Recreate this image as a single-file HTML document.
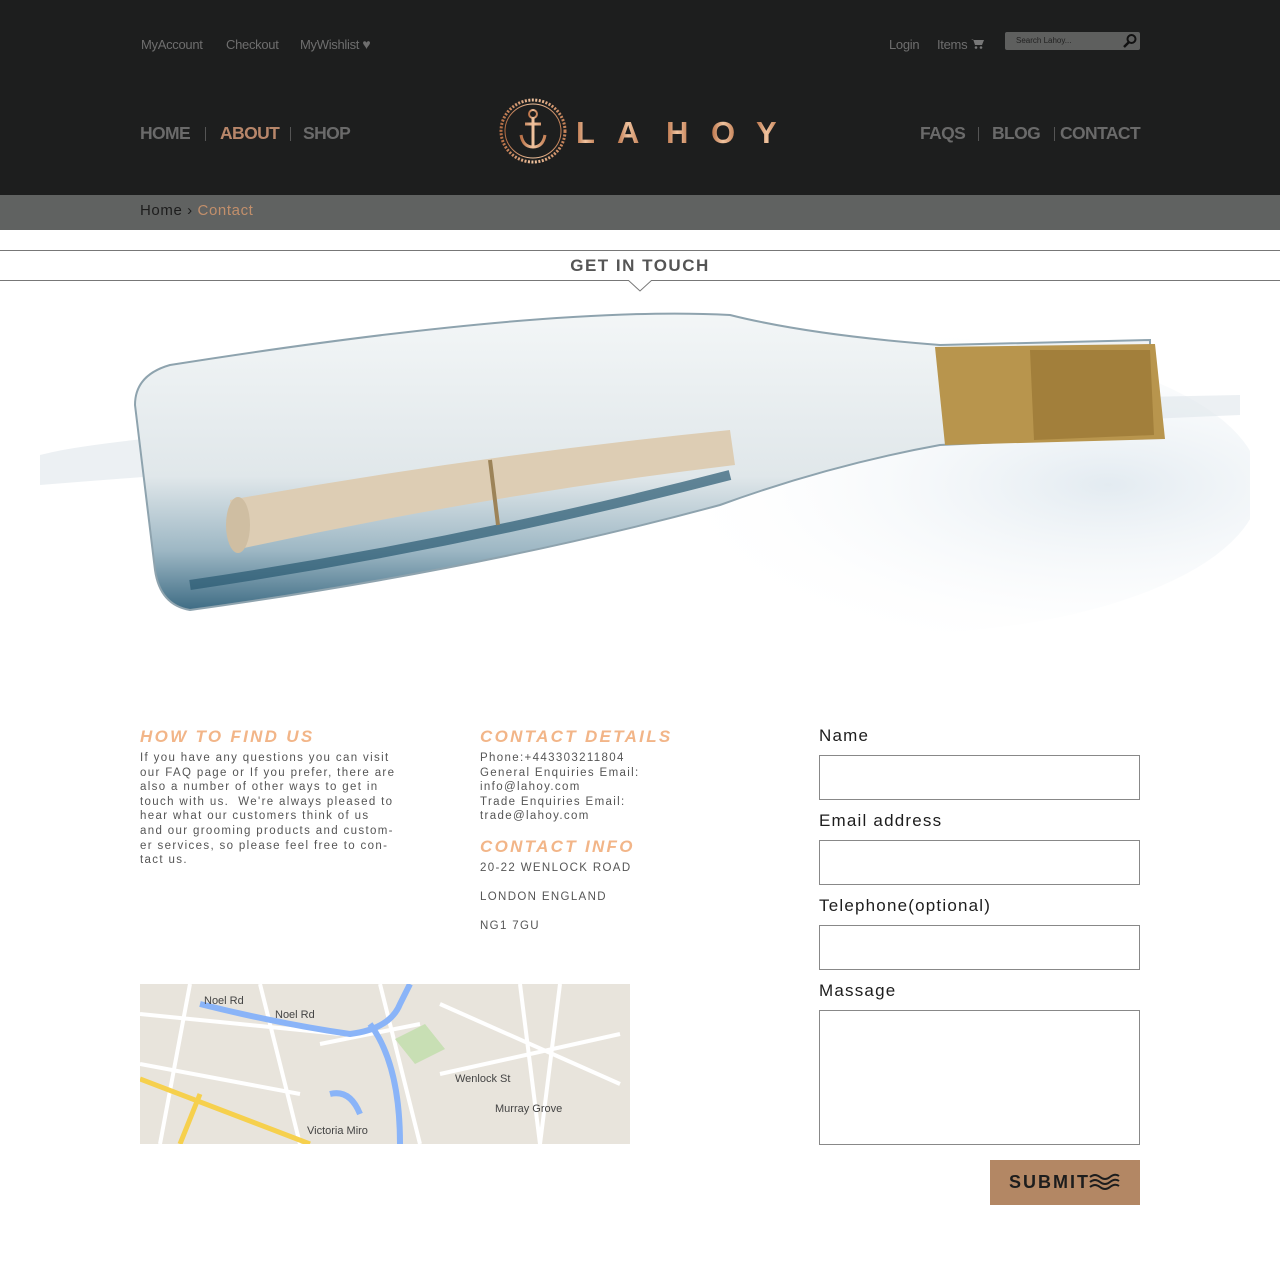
<!DOCTYPE html>
<html><head><meta charset="utf-8"><style>
*{margin:0;padding:0;box-sizing:border-box}
body{width:1280px;height:1268px;background:#fff;font-family:"Liberation Sans",sans-serif;position:relative;overflow:hidden}
.hdr{position:absolute;left:0;top:0;width:1280px;height:195px;background:#1d1e1e}
.a{position:absolute;white-space:nowrap}
.top{color:#6e6e6e;font-size:13px;letter-spacing:-0.3px}
.nav{color:#6a6a6a;font-size:17.5px;font-weight:bold;letter-spacing:-0.6px}
.sep{position:absolute;width:1px;height:14px;background:#555}
.bc{position:absolute;left:0;top:195px;width:1280px;height:35px;background:#606261}
.h{color:#f2b588;font-style:italic;font-weight:bold;font-size:17px;letter-spacing:2.3px}
.p{color:#555;font-size:11.5px;letter-spacing:1.35px;line-height:14.6px}
.lbl{color:#1d1d1d;font-size:17px;letter-spacing:1.2px}
.in{position:absolute;left:819px;width:321px;height:45px;border:1px solid #888;background:#fff}
</style></head><body>
<div class="hdr"></div>
<div class="a top" style="left:141px;top:37px">MyAccount</div>
<div class="a top" style="left:226px;top:37px">Checkout</div>
<div class="a top" style="left:300px;top:37px">MyWishlist <span style="font-size:14px;line-height:13px">♥</span></div>
<div class="a top" style="left:889px;top:37px">Login</div>
<div class="a top" style="left:937px;top:37px">Items <svg width="13" height="11" viewBox="0 0 13 11"><path d="M0 1h2l2 6h7l2-5H3" fill="#777"/><circle cx="5" cy="9.5" r="1.3" fill="#777"/><circle cx="10" cy="9.5" r="1.3" fill="#777"/></svg></div>
<div class="a" style="left:1005px;top:32px;width:135px;height:18px;background:#5e5f5e;border-radius:2px"></div>
<div class="a" style="left:1016px;top:36px;font-size:8px;color:#222">Search Lahoy...</div>
<svg class="a" style="left:1122px;top:33px" width="16" height="16" viewBox="0 0 16 16"><circle cx="9.5" cy="6" r="4" fill="none" stroke="#111" stroke-width="2"/><path d="M7 9l-5 5" stroke="#111" stroke-width="2.5"/></svg>
<div class="a nav" style="left:140px;top:123px">HOME</div>
<div class="sep" style="left:205px;top:127px"></div>
<div class="a nav" style="left:220px;top:123px;color:#b7866a">ABOUT</div>
<div class="sep" style="left:290px;top:127px"></div>
<div class="a nav" style="left:303px;top:123px">SHOP</div>
<div class="a nav" style="left:920px;top:123px">FAQS</div>
<div class="sep" style="left:978px;top:127px"></div>
<div class="a nav" style="left:992px;top:123px">BLOG</div>
<div class="sep" style="left:1054px;top:127px"></div>
<div class="a nav" style="left:1060px;top:123px">CONTACT</div>
<svg class="a" style="left:498px;top:97px" width="290" height="70" viewBox="0 0 290 70">
<defs><linearGradient id="g" x1="0" x2="1"><stop offset="0" stop-color="#b86f45"/><stop offset=".5" stop-color="#f0c4a0"/><stop offset="1" stop-color="#c58157"/></linearGradient></defs>
<ellipse cx="35" cy="34" rx="32" ry="31" fill="none" stroke="url(#g)" stroke-width="3" stroke-dasharray="2 1.5"/>
<ellipse cx="35" cy="34" rx="28" ry="27" fill="none" stroke="url(#g)" stroke-width="1"/>
<circle cx="35" cy="17" r="4" fill="none" stroke="url(#g)" stroke-width="2"/>
<path d="M35 21v29M27 27h16M23 38q2 12 12 12q10 0 12-12" fill="none" stroke="url(#g)" stroke-width="3"/>
<g font-family="Liberation Sans" font-size="31" fill="url(#g)" font-weight="bold"><text x="78" y="46">L</text><text x="119" y="46">A</text><text x="168" y="46">H</text><text x="213" y="46">O</text><text x="258" y="46">Y</text></g>
</svg>
<div class="bc"></div>
<div class="a" style="left:140px;top:202px;font-size:15px;color:#1d1d1d;letter-spacing:.6px">Home › <span style="color:#c28f6b">Contact</span></div>
<div class="a" style="left:0;top:250px;width:1280px;height:1px;background:#777"></div>
<div class="a" style="left:0;top:280px;width:1280px;height:1px;background:#777"></div>
<svg class="a" style="left:628px;top:280px" width="24" height="12"><path d="M0 0l12 11L24 0" fill="#fff" stroke="#777"/></svg>
<div class="a" style="left:0;top:256px;width:1280px;text-align:center;font-size:17px;font-weight:bold;color:#555;letter-spacing:1.5px">GET IN TOUCH</div>
<svg class="a" style="left:30px;top:295px" width="1220" height="345" viewBox="0 0 1220 345">
<defs><linearGradient id="bt" x1="0" y1="0" x2="0" y2="1"><stop offset="0" stop-color="#f3f6f7"/><stop offset=".55" stop-color="#e0e7ea"/><stop offset=".8" stop-color="#9db7c4"/><stop offset="1" stop-color="#3e6c84"/></linearGradient>
<radialGradient id="sp" cx=".8" cy=".5" r=".6"><stop offset="0" stop-color="#e3ebf1"/><stop offset="1" stop-color="#fff" stop-opacity="0"/></radialGradient></defs>
<ellipse cx="850" cy="190" rx="380" ry="150" fill="url(#sp)"/>
<path d="M10 160q150-40 1200-60v20q-700 30-1200 70z" fill="#dfe6eb" opacity=".6"/>
<path d="M140 70q380-60 560-50q80 20 210 30l210-5v95l-210 10q-110 20-220 60q-240 65-530 105q-30-5-35-40l-20-165q0-30 35-40z" fill="url(#bt)" stroke="#8ea3ae" stroke-width="2"/>
<path d="M160 290q270-40 540-110" stroke="#2a5a72" stroke-width="10" fill="none" opacity=".7"/>
<path d="M905 52l220-3 10 95-220 6z" fill="#b8954d"/>
<path d="M1000 55l120 0 4 85-120 5z" fill="#8c6a2a" opacity=".5"/>
<path d="M200 205q250-45 500-70l5 35q-250 30-500 85z" fill="#ddcdb4"/>
<ellipse cx="208" cy="230" rx="12" ry="28" fill="#cfbea2"/>
<path d="M460 165l8 65" stroke="#9c8358" stroke-width="4"/>
</svg>
<div class="a h" style="left:140px;top:727px">HOW TO FIND US</div>
<div class="a p" style="left:140px;top:751px">If you have any questions you can visit<br>our FAQ page or If you prefer, there are<br>also a number of other ways to get in<br>touch with us.&nbsp; We're always pleased to<br>hear what our customers think of us<br>and our grooming products and custom-<br>er services, so please feel free to con-<br>tact us.</div>
<div class="a h" style="left:480px;top:727px">CONTACT DETAILS</div>
<div class="a p" style="left:480px;top:751px">Phone:+443303211804<br>General Enquiries Email:<br>info@lahoy.com<br>Trade Enquiries Email:<br>trade@lahoy.com</div>
<div class="a h" style="left:480px;top:837px">CONTACT INFO</div>
<div class="a p" style="left:480px;top:854px;line-height:29px">20-22 WENLOCK ROAD<br>LONDON ENGLAND<br>NG1 7GU</div>
<svg class="a" style="left:140px;top:984px" width="490" height="160" viewBox="0 0 490 160">
<rect width="490" height="160" fill="#e8e4dc"/>
<g stroke="#fff" stroke-width="4" fill="none"><path d="M0 30l200 20M50 0l-30 160M120 0l40 160M240 0l40 160M300 20l180 80M380 0l20 160M0 80l160 30M300 90l180-40M420 0l-20 160M180 60l100-20"/></g>
<path d="M60 20q80 20 150 30q40-5 50-30l10-20M230 40q30 40 30 120M190 110q20-5 30 20" stroke="#8ab4f8" stroke-width="6" fill="none"/>
<path d="M0 95l170 65M60 110l-20 50" stroke="#f6d04d" stroke-width="5" fill="none"/>
<path d="M255 55l30-15 20 25-30 15z" fill="#c8dfb4"/>
<g font-size="11" fill="#444" font-family="Liberation Sans"><text x="64" y="20">Noel Rd</text><text x="135" y="34">Noel Rd</text><text x="315" y="98">Wenlock St</text><text x="355" y="128">Murray Grove</text><text x="167" y="150">Victoria Miro</text></g>
</svg>
<div class="a lbl" style="left:819px;top:726px">Name</div>
<div class="in" style="top:755px"></div>
<div class="a lbl" style="left:819px;top:811px">Email address</div>
<div class="in" style="top:840px"></div>
<div class="a lbl" style="left:819px;top:896px">Telephone(optional)</div>
<div class="in" style="top:925px"></div>
<div class="a lbl" style="left:819px;top:981px">Massage</div>
<div class="in" style="top:1010px;height:135px"></div>
<div class="a" style="left:990px;top:1160px;width:150px;height:45px;background:#b38764"></div>
<div class="a" style="left:1009px;top:1172px;font-size:18px;color:#1d1d1d;letter-spacing:2px;font-weight:bold">SUBMIT</div>
<svg class="a" style="left:1089px;top:1173px" width="32" height="18" viewBox="0 0 32 18"><g fill="none" stroke="#1d1d1d" stroke-width="2"><path d="M1 4q5-4 10 0t10 0 9-1M1 9q5-4 10 0t10 0 9-1M1 14q5-4 10 0t10 0 9-1"/></g></svg>
</body></html>
